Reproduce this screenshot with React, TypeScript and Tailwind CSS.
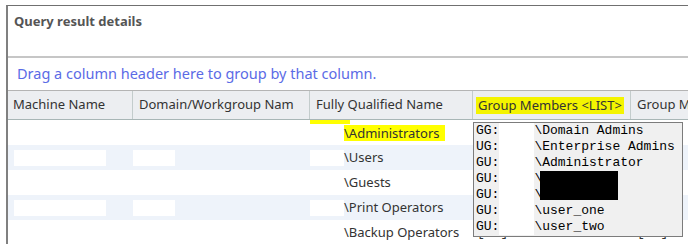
const rows = [
  { name: "\\Administrators", band: false, mark: true },
  { name: "\\Users", band: true, mark: false },
  { name: "\\Guests", band: false, mark: false },
  { name: "\\Print Operators", band: true, mark: false },
  { name: "\\Backup Operators", band: false, mark: false },
];

const members = [
  { kind: "GG:", name: "\\Domain Admins" },
  { kind: "UG:", name: "\\Enterprise Admins" },
  { kind: "GU:", name: "\\Administrator" },
  { kind: "GU:", name: "\\" },
  { kind: "GU:", name: "\\" },
  { kind: "GU:", name: "\\user_one" },
  { kind: "GU:", name: "\\user_two" },
];

export default function App() {
  return (
    <div className="relative w-[688px] h-[244px] overflow-hidden bg-white font-['Noto_Sans',sans-serif] text-[13px] text-[#333]">
      <div className="ml-[6px] mt-[5px] border-l-2 border-t border-l-[#808080] border-t-[#707070]">
        {/* title */}
        <div className="h-[50px] pt-[6px] pl-[6px] leading-[18px] font-bold text-[#555]">
          Query result details
        </div>
        <div className="h-[2px] bg-[#c6c6c6]" />

        {/* group by panel */}
        <div className="h-[33px] flex items-center pl-[9px] text-[14.5px] text-[#5b6be6] border-b border-[#b4b4b4]">
          Drag a column header here to group by that column.
        </div>

        {/* header */}
        <div className="flex h-[29px] bg-[#eceef1] border-b border-[#a8b6b6] whitespace-nowrap">
          <div className="w-[125px] shrink-0 flex items-center pl-[5px] border-r border-[#c3cccc] overflow-hidden">
            Machine Name
          </div>
          <div className="w-[177px] shrink-0 flex items-center pl-[6px] border-r border-[#c3cccc] overflow-hidden">
            Domain/Workgroup Nam
          </div>
          <div className="w-[163px] shrink-0 flex items-center pl-[6px] border-r border-[#c3cccc] overflow-hidden">
            Fully Qualified Name
          </div>
          <div className="w-[158px] shrink-0 flex items-center pl-[3px] border-r border-[#c3cccc] overflow-hidden">
            <span className="bg-[#f4f400] px-[2px] leading-[17px]">Group Members &lt;LIST&gt;</span>
          </div>
          <div className="flex-1 flex items-center pl-[6px] overflow-hidden">Group M</div>
        </div>

        {/* rows */}
        {rows.map((r, i) => (
          <div
            key={i}
            className={`flex h-[25px] whitespace-nowrap ${r.band ? "bg-[#eef3fa]" : "bg-white"}`}
          >
            <div className="w-[125px] shrink-0 flex items-center pl-[6px]">
              {r.band && <span className="w-[92px] h-[16px] bg-white" />}
            </div>
            <div className="w-[177px] shrink-0 flex items-center">
              {r.band && <span className="w-[42px] h-[16px] bg-white" />}
            </div>
            <div className="w-[163px] shrink-0 flex items-center">
              <span className={`w-[34px] h-[16px] ${r.band ? "bg-white" : ""}`} />
              <span className={r.mark ? "bg-[#ffff00] pr-[5px] leading-[16px]" : ""}>{r.name}</span>
            </div>
            <div className="w-[158px] shrink-0 flex items-center pl-[4px] font-['Liberation_Mono',monospace]">
              {i === 4 ? "[GU]" : ""}
            </div>
            <div className="flex-1 flex items-center pl-[6px] font-['Liberation_Mono',monospace]">
              {i === 4 ? "[..]" : ""}
            </div>
          </div>
        ))}
      </div>

      {/* marker stroke under header */}
      <div className="absolute left-[310px] top-[120px] w-[40px] h-[4px] bg-[#ffff00]" />

      {/* list popup */}
      <div className="absolute left-[473px] top-[122px] w-[210px] h-[115px] border border-[#7c7c7c] bg-[#f0f0f0] pl-[2px] font-['Liberation_Mono',monospace] text-[13px] leading-[16px] text-black whitespace-pre">
        {members.map((m, i) => (
          <div key={i} className="flex h-[16px]">
            <span>{m.kind}</span>
            <span className="w-[35px] h-[16px] bg-white" />
            <span>{m.name}</span>
          </div>
        ))}
        <div className="absolute left-[66px] top-[48px] w-[78px] h-[29px] bg-black" />
      </div>
    </div>
  );
}
